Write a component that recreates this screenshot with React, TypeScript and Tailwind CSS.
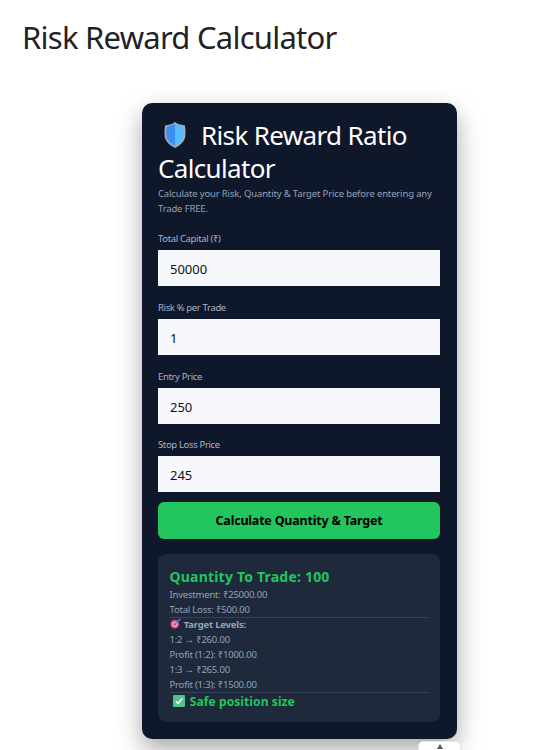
import { useState } from 'react';

function ShieldIcon() {
    return (
        <svg viewBox="0 0 24 28" className="inline-block w-[24px] h-[28px] align-[-4px]">
            <path d="M12 1 L15 3 L22 4.500 Q23 13 22 17 Q20 23 12 27 Q4 23 2 17 Q1 13 2 4.500 L9 3 Z" fill="#a3acb9" />
            <path d="M12 3 L3.500 5.800 Q3 13 3.700 16.500 Q5.500 22 12 25 Z" fill="#3b8ef3" />
            <path d="M12 3 L20.500 5.800 Q21 13 20.300 16.500 Q18.500 22 12 25 Z" fill="#55bdfd" />
        </svg>
    );
}

function TargetIcon() {
    return (
        <svg viewBox="0 0 12 12" className="inline-block w-[11px] h-[11px] align-[-1px]">
            <circle cx="5.200" cy="6.800" r="4.800" fill="#d8457c" />
            <circle cx="5.200" cy="6.800" r="3" fill="#f3b6cb" />
            <circle cx="5.200" cy="6.800" r="1.500" fill="#c93a6c" />
            <path d="M5.500 6.500 L10 2" stroke="#4a90d9" strokeWidth="1.400" />
            <path d="M9 1 L11.500 0.500 L11 3 Z" fill="#4a90d9" />
        </svg>
    );
}

function CheckIcon() {
    return (
        <svg viewBox="0 0 12 12" className="inline-block w-[12px] h-[12px] align-[-1px]">
            <rect x="0" y="0" width="12" height="12" rx="1" fill="#4fc38a" />
            <path d="M2.800 6.200 L5 8.500 L9.300 3.500" stroke="#ffffff" strokeWidth="1.400" fill="none" />
        </svg>
    );
}

function Field({ label, defaultValue }: { label: string; defaultValue: string }) {
    const [value, setValue] = useState(defaultValue);
    return (
        <div className="flex flex-col">
            <label className="text-[9.5px] leading-[13px] tracking-[-0.35px] text-[#a5b4c8] mb-[5px]">{label}</label>
            <input
                value={value}
                onChange={e => setValue(e.target.value)}
                className="w-full h-[36px] px-3 pt-[2px] bg-[#f6f8fb] text-[#111] text-[13px] outline-none"
            />
        </div>
    );
}

export default function App() {
    return (
        <div className="relative h-[750px] overflow-hidden bg-white font-['Noto_Sans','Open_Sans',sans-serif]">
            <h1 className="pl-[22px] pt-[16px] text-[31px] leading-[42px] font-normal text-[#1f2328] tracking-[-0.75px]">Risk Reward Calculator</h1>

            <div className="w-[315px] h-[636px] ml-[142px] mt-[45px] rounded-[10px] bg-[#0f172a] pl-[16px] pr-[17px] pt-[16px] shadow-[0_10px_25px_rgba(0,0,0,0.35)]">
                <h2 className="text-[26px] leading-[33px] text-white font-normal tracking-[-0.65px]">
                    <span className="ml-[5px] mr-[14px]"><ShieldIcon /></span>Risk Reward Ratio Calculator
                </h2>
                <p className="mt-[1px] text-[9.5px] leading-[15px] tracking-[-0.15px] text-[#94a3b8]">
                    Calculate your Risk, Quantity &amp; Target Price before entering any Trade FREE.
                </p>

                <div className="mt-[16px] flex flex-col gap-[14.8px]">
                    <Field label="Total Capital (₹)" defaultValue="50000" />
                    <Field label="Risk % per Trade" defaultValue="1" />
                    <Field label="Entry Price" defaultValue="250" />
                    <Field label="Stop Loss Price" defaultValue="245" />
                </div>

                <button className="mt-[10px] w-full h-[37px] rounded-[6px] bg-[#22c55e] text-black text-[12.5px] tracking-[-0.2px] font-bold">
                    Calculate Quantity &amp; Target
                </button>

                <div className="mt-[15px] h-[168px] rounded-[8px] bg-[#1e293b] px-[11.500px] pt-[13px] text-[9.5px] leading-[15px] tracking-[-0.2px] text-[#94a3b8]">
                    <h3 className="text-[14px] leading-[20px] tracking-[0.2px] font-bold text-[#22c55e]">Quantity To Trade: 100</h3>
                    <p>Investment: ₹25000.00</p>
                    <p>Total Loss: ₹500.00</p>
                    <div className="border-t border-[#334155]">
                        <p className="font-bold leading-[14px]"><TargetIcon /> <span className="ml-[1px]">Target Levels:</span></p>
                        <p>1:2 → ₹260.00</p>
                        <p>Profit (1:2): ₹1000.00</p>
                        <p>1:3 → ₹265.00</p>
                        <p>Profit (1:3): ₹1500.00</p>
                    </div>
                    <div className="border-t border-[#334155] pl-[3px] text-[12px] leading-[17px] tracking-[0.1px] font-bold text-[#22c55e]">
                        <CheckIcon /> <span className="ml-[2px]">Safe position size</span>
                    </div>
                </div>
            </div>

            <div className="absolute left-[418px] top-[741px] w-[43px] h-[30px] rounded-[5px] bg-white border border-[#e5e7eb] flex justify-center pt-[2px]">
                <span className="w-0 h-0 border-x-[3px] border-x-transparent border-b-[5px] border-b-[#555]"></span>
            </div>
        </div>
    );
}
